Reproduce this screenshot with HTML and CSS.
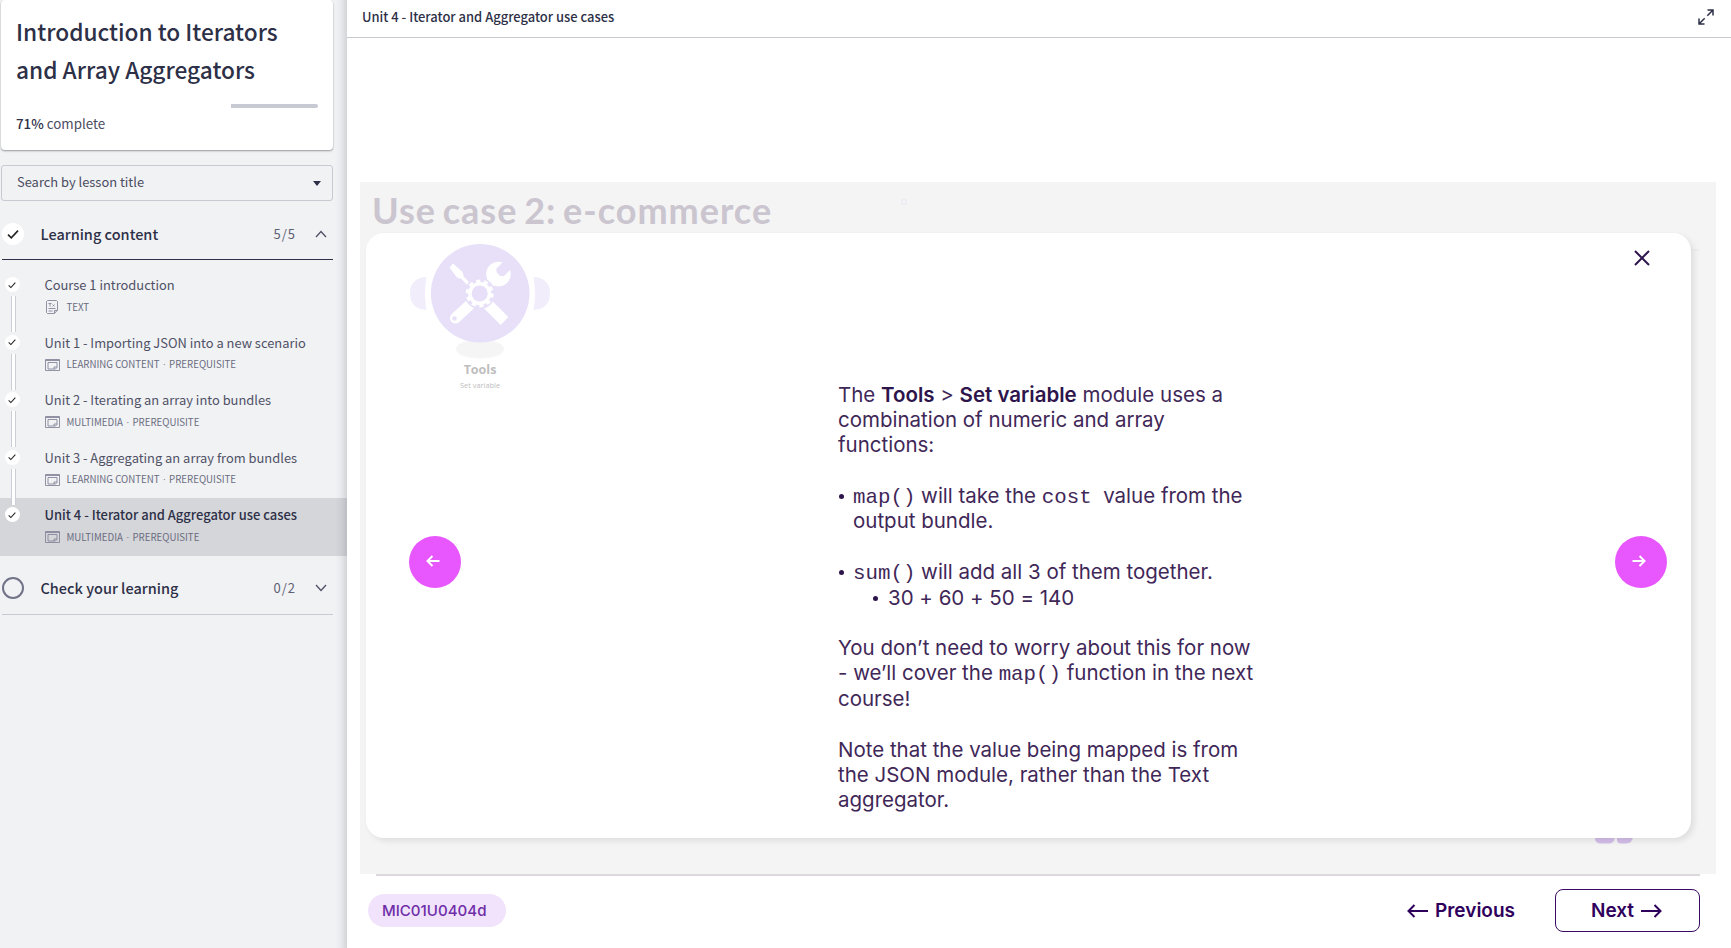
FILE: index.html
```
<!DOCTYPE html>
<html lang="en">
<head>
<meta charset="utf-8">
<title>Introduction to Iterators and Array Aggregators</title>
<link rel="stylesheet" href="styles.css">
</head>
<body>
<svg class="defs" width="0" height="0">
  <symbol id="check" viewBox="0 0 12 12"><path d="M1 6.6 4.3 9.8 11 2.6" fill="none" stroke="currentColor" stroke-width="1.6"/></symbol>
  <symbol id="media" viewBox="0 0 15 12"><path d="M.5.5h14v11H.5zM.5 1.5h14M3 3.500h9v5l-1.500 1.500H3zM9 10V8h3" fill="none" stroke="currentColor" stroke-width=".9"/></symbol>
  <symbol id="doc" viewBox="0 0 12 14"><path d="M1.500.5h9l1 1V10l-3 3.500h-7l-1-1v-11zM2.500 8.500h7M2.500 11h4M8.500 13v-2.500h3M2.500 3.500h3M4 3.500v3M6.500 4.500l2 2M8.500 4.500l-2 2" fill="none" stroke="currentColor" stroke-width=".9"/></symbol>
</svg>
<div class="app">
  <aside class="sidebar">
    <section class="course-card">
      <h1 class="course-title">Introduction to Iterators<br>and Array Aggregators</h1>
      <div class="progress"><div class="progress-rest"></div></div>
      <p class="complete"><b>71%</b> complete</p>
    </section>
    <div class="search"><span>Search by lesson title</span><i class="caret"></i></div>
    <div class="section section-open">
      <span class="section-mark done"><svg class="check-lg"><use href="#check"/></svg></span>
      <span class="section-name">Learning content</span>
      <span class="section-count">5/5</span>
      <svg class="chevron" viewBox="0 0 12 8"><path d="M1 7 6 1.500 11 7"/></svg>
    </div>
    <ul class="lessons">
      <li class="lesson"><span class="dot"><svg class="check-sm"><use href="#check"/></svg></span>
        <div class="lesson-body"><span class="lesson-name">Course 1 introduction</span><span class="lesson-meta"><svg class="doc-icon"><use href="#doc"/></svg><span>TEXT</span></span></div></li>
      <li class="lesson"><span class="dot"><svg class="check-sm"><use href="#check"/></svg></span>
        <div class="lesson-body"><span class="lesson-name">Unit 1 - Importing JSON into a new scenario</span><span class="lesson-meta"><svg class="media-icon"><use href="#media"/></svg><span>LEARNING CONTENT <i>·</i> PREREQUISITE</span></span></div></li>
      <li class="lesson"><span class="dot"><svg class="check-sm"><use href="#check"/></svg></span>
        <div class="lesson-body"><span class="lesson-name">Unit 2 - Iterating an array into bundles</span><span class="lesson-meta"><svg class="media-icon"><use href="#media"/></svg><span>MULTIMEDIA <i>·</i> PREREQUISITE</span></span></div></li>
      <li class="lesson"><span class="dot"><svg class="check-sm"><use href="#check"/></svg></span>
        <div class="lesson-body"><span class="lesson-name">Unit 3 - Aggregating an array from bundles</span><span class="lesson-meta"><svg class="media-icon"><use href="#media"/></svg><span>LEARNING CONTENT <i>·</i> PREREQUISITE</span></span></div></li>
      <li class="lesson lesson-active"><span class="dot"><svg class="check-sm"><use href="#check"/></svg></span>
        <div class="lesson-body"><span class="lesson-name">Unit 4 - Iterator and Aggregator use cases</span><span class="lesson-meta"><svg class="media-icon"><use href="#media"/></svg><span>MULTIMEDIA <i>·</i> PREREQUISITE</span></span></div></li>
    </ul>
    <div class="section section-closed">
      <span class="section-mark"></span>
      <span class="section-name">Check your learning</span>
      <span class="section-count">0/2</span>
      <svg class="chevron" viewBox="0 0 12 8"><path d="M1 1 6 6.500 11 1"/></svg>
    </div>
  </aside>
  <main class="main">
    <header class="topbar">
      <span class="topbar-title">Unit 4 - Iterator and Aggregator use cases</span>
      <svg class="expand" viewBox="0 0 16 16"><path d="M9.500 1H15v5.500M15 1 9.300 6.700M6.500 15H1V9.500M1 15l5.700-5.700"/></svg>
    </header>
    <div class="stage">
      <section class="slide">
        <h2 class="slide-title">Use case 2: e-commerce</h2>
        <span class="speck"></span><span class="rule-end"></span>
        <svg class="brand" viewBox="0 0 38 24"><rect x="0" y="0" width="19.500" height="22.500" rx="5"/><path d="M22 0h16v15q0 7.500-7.500 7.500H26q-4 0-4-4z"/></svg>
        <div class="modal">
          <svg class="tools" viewBox="0 0 142 116">
            <path class="ear" d="M16.500 33Q0 34 0 49.500T16.500 66q-3-16 0-33zM123.500 33Q140 34 140 49.500T123.500 66q3-16 0-33z"/>
            <ellipse class="shade" cx="70" cy="105" rx="24" ry="9.500"/>
            <circle class="face" cx="70.200" cy="49.300" r="49.300"/>
            <g class="tool">
              <path d="M39.500 23.500 43 19.500 52.500 28 54 33 62 41 59.500 43.500 51.500 35 47 33.500z"/>
              <path class="bar" stroke-width="9" d="M74 45.500 86 33"/>
              <circle cx="88.500" cy="30" r="12.300"/>
              <path class="bar" stroke-width="11" d="M73 55.500 94.500 77"/>
              <path class="bar round-end" stroke-width="11" d="M66 55 45.500 74"/>
            </g>
            <path class="face" d="M95 16 86.500 24.500V28L90 32h4L103 23z"/>
            <circle class="face" cx="69.700" cy="49.500" r="15.500"/>
            <circle class="tool" cx="69.700" cy="49.500" r="11.500"/>
            <circle class="teeth" cx="69.700" cy="49.500" r="12"/>
            <circle class="face" cx="69.700" cy="49.500" r="8"/>
            <circle class="face" cx="44.500" cy="74.500" r="2.200"/>
          </svg>
          <div class="tools-label"><b>Tools</b><span>Set variable</span></div>
          <svg class="close" viewBox="0 0 16 16"><path d="M1 1 15 15M15 1 1 15"/></svg>
          <div class="copy">
            <p>The <b>Tools</b> &gt; <b>Set variable</b> module uses a<br>combination of numeric and array<br>functions:</p>
            <ul class="points">
              <li><code>map()</code> will take the <code>cost</code>&nbsp; value from the<br>output bundle.</li>
              <li><code>sum()</code> will add all 3 of them together.
                <ul class="subpoints"><li>30 + 60 + 50 = 140</li></ul></li>
            </ul>
            <p>You don’t need to worry about this for now<br>- we’ll cover the <code>map()</code> function in the next<br>course!</p>
            <p>Note that the value being mapped is from<br>the JSON module, rather than the Text<br>aggregator.</p>
          </div>
          <button class="round round-prev"><svg viewBox="0 0 14 12"><path d="M13.500 6H1.500M6.500 1 1.500 6l5 5"/></svg></button>
          <button class="round round-next"><svg viewBox="0 0 14 12"><path d="M.5 6h12M7.500 1l5 5-5 5"/></svg></button>
        </div>
      </section>
      <footer class="footer">
        <span class="tag">MIC01U0404d</span>
        <div class="nav">
          <button class="link"><svg class="arrow" viewBox="0 0 22 14"><path d="M21 7H1.500M7.500 1 1.500 7l6 6"/></svg><span>Previous</span></button>
          <button class="next"><span>Next</span><svg class="arrow" viewBox="0 0 22 14"><path d="M1 7h19.500M14.500 1l6 6-6 6"/></svg></button>
        </div>
      </footer>
    </div>
  </main>
</div>
</body>
</html>
```
FILE: styles.css
```
* { box-sizing: border-box; }
body { margin: 0; background: #fff; }
h1, h2, p, ul { margin: 0; padding: 0; font-weight: 400; }
ul { list-style: none; }
button { border: 0; background: none; padding: 0; font: inherit; color: inherit; }
svg { display: block; flex: none; }
.defs { position: absolute; }
.app { display: flex; width: 1731px; height: 948px; overflow: hidden; font-family: "Noto Sans CJK SC", "Noto Sans", sans-serif; color: #2d3047; }

.sidebar { position: relative; width: 347px; flex: none; background: #f1f2f4; display: flex; flex-direction: column; }
.sidebar::after { content: ""; position: absolute; inset: 0 0 0 auto; width: 12px; background: linear-gradient(90deg, rgba(90,90,105,0), rgba(90,90,105,.06) 50%, rgba(90,90,105,.2)); }
.course-card { width: 332px; height: 150px; margin-left: 1px; padding: 13px 15px 0; background: #fff; border-radius: 4px; box-shadow: 0 1px 2px rgba(0,0,0,.38); }
.course-title { font-size: 22.700px; font-weight: 500; line-height: 38px; }
.progress { display: flex; justify-content: flex-end; height: 4px; margin-top: 15px; }
.progress-rest { width: 87px; background: #c7c9d3; border-radius: 0 2px 2px 0; }
.complete { font-size: 13.350px; line-height: 20px; margin-top: 6px; color: #4a4c60; }
.complete b { font-weight: 500; color: #2d3047; }
.search { display: flex; align-items: center; justify-content: space-between; width: 332px; height: 36px; margin: 15px 0 0 1px; padding: 0 11px 0 15px; border: 1px solid #c7c9d3; border-radius: 3px; font-size: 12.900px; color: #4a4c60; }
.search span { margin-top: -3px; }
.caret { border: 4px solid transparent; border-top: 5px solid #2d3047; border-bottom: 0; }
.section { display: flex; align-items: center; width: 331px; margin-left: 2px; border-bottom: 1px solid #c7c9d3; }
.section-open { height: 59px; border-color: #2d3047; padding-top: 8px; }
.section-closed { height: 58px; margin-top: 1px; padding-top: 6px; }
.section-mark { width: 22px; height: 22px; border-radius: 50%; border: 2px solid #717389; display: grid; place-items: center; }
.section-mark.done { background: #fff; border: 0; color: #222; }
.check-lg { width: 12px; height: 12px; }
.section-name { flex: 1; margin-top: -1px; padding-left: 16.500px; font-size: 14.500px; font-weight: 500; }
.section-count { margin-top: -1px; font-size: 13px; color: #5d5f73; letter-spacing: 1px; }
.chevron { width: 12px; height: 8px; margin: 0 6px 0 19px; fill: none; stroke: #4f5166; stroke-width: 1.300; }
.lessons { padding-top: 8px; }
.lesson { position: relative; display: flex; height: 57.500px; padding: 9px 0 0 4.500px; }
.lesson:not(:last-child)::after { content: ""; position: absolute; left: 11px; top: 28px; width: 3px; height: 36px; border: solid #cdced5; border-width: 0 1px; background: #fff; z-index: 1; }
.dot { width: 15px; height: 15px; border-radius: 50%; background: #fff; display: grid; place-items: center; color: #222; }
.check-sm { width: 8px; height: 8px; }
.lesson-body { display: flex; flex-direction: column; padding-left: 25px; }
.lesson-name { font-size: 12.900px; line-height: 16px; color: #4f5166; }
.lesson-active { background: #d5d6da; }
.lesson-active .lesson-name { font-size: 12.960px; font-weight: 500; color: #2d3047; }
.lesson-meta { display: flex; align-items: center; height: 14px; margin-top: 7px; font-size: 9.700px; line-height: 14px; color: #6a6c80; }
.lesson-meta i { margin: 0 1.300px; font-family: "Open Sans", sans-serif; font-style: normal; }
.lesson-meta svg { color: #85879a; margin-right: 7px; }
.media-icon { width: 15px; height: 12px; }
.lesson-meta .doc-icon { width: 12px; height: 14px; margin: 0 9px 0 1px; }

.main { flex: 1; display: flex; flex-direction: column; }
.topbar { display: flex; align-items: center; justify-content: space-between; height: 38px; padding: 0 17px 3px 15px; border-bottom: 1px solid #c7c9d3; font-size: 12.940px; font-weight: 500; }
.topbar-title { margin-top: -2px; }
.expand { width: 16px; height: 16px; fill: none; stroke: #2d3047; stroke-width: 1.500; }
.stage { padding: 144px 15px 0 13px; font-family: Inter, sans-serif; color: #2d144b; }
.slide { position: relative; height: 692px; padding: 11px 0 0 12px; background: #f4f4f4; }
.slide-title { font-family: Lato, sans-serif; font-size: 36px; font-weight: 700; line-height: 34px; letter-spacing: 1px; word-spacing: -3px; color: #cac5cf; }
.speck { position: absolute; left: 541px; top: 17px; width: 6px; height: 6px; border: 1px solid #eee6f4; border-radius: 50%; }
.rule-end { position: absolute; left: 1331px; top: 67px; width: 9px; height: 2px; background: #eee; }
.brand { position: absolute; left: 1235px; top: 639px; width: 38px; height: 24px; fill: #d3bee8; }
.modal { position: absolute; left: 6px; top: 51px; width: 1325px; height: 605px; background: #fff; border-radius: 18px; box-shadow: 3px 3px 6px rgba(0,0,0,.09); }
.tools { position: absolute; left: 44px; top: 11px; width: 142px; height: 116px; }
.ear { fill: #f1edfb; }
.shade { fill: #f5f5f5; }
.face { fill: #e7e0f8; }
.tool { fill: #fff; }
.bar { fill: none; stroke: #fff; stroke-linejoin: round; }
.round-end { stroke-linecap: round; }
.teeth { fill: none; stroke: #fff; stroke-width: 4; stroke-dasharray: 4 3.540; }
.tools-label { position: absolute; left: 44px; top: 127px; width: 140px; display: flex; flex-direction: column; align-items: center; font-family: "Open Sans", sans-serif; color: #bebebe; }
.tools-label b { font-size: 12.500px; line-height: 20px; }
.tools-label span { font-size: 7.400px; line-height: 11px; }
.close { position: absolute; left: 1268px; top: 17px; width: 16px; height: 16px; fill: none; stroke: #2d144b; stroke-width: 2; }
.copy { padding: 148.500px 0 0 472px; width: 920px; font-size: 20.500px; font-weight: 300; line-height: 25.260px; letter-spacing: -.01px; color: #3f2858; white-space: nowrap; }
.copy b { font-weight: 600; color: #2d144b; }
.copy p { margin-bottom: 25.260px; }
.copy code { font-family: "Liberation Mono", monospace; font-size: 20.800px; line-height: 1; }
.points > li { position: relative; padding-left: 15px; margin-bottom: 25.260px; }
.points li::before { content: ""; position: absolute; left: 1px; top: 11px; width: 5px; height: 5px; border-radius: 50%; background: #2d144b; }
.subpoints li { position: relative; padding-left: 35px; }
.points .subpoints li::before { left: 20px; }
.round { position: absolute; top: 302.500px; width: 52.500px; height: 52.500px; border-radius: 50%; background: #e856fe; display: grid; place-items: center; }
.round svg { width: 14px; height: 12px; margin: -1px 3px 0 0; fill: none; stroke: #fff; stroke-width: 2; }
.round-prev { left: 42.500px; }
.round-next { left: 1248.500px; }
.footer { display: flex; align-items: center; justify-content: space-between; height: 73px; margin: 0 16px 0 8px; position: relative; }
.footer::before { content: ""; position: absolute; left: 8px; right: 0; top: 0; height: 2px; background: #dcd7dc; }
.tag { display: flex; align-items: center; width: 138px; height: 33px; padding-left: 14px; border-radius: 17px; background: #f0e3fb; color: #6f2da8; font-size: 15.050px; font-weight: 500; }
.nav { display: flex; align-items: center; gap: 40px; font-size: 19px; font-weight: 600; color: #2f005c; }
.link, .next { display: flex; align-items: center; gap: 6px; }
.next { justify-content: center; width: 145px; height: 43px; padding-right: 2px; border: 1.500px solid #3a0a66; border-radius: 8px; }
.arrow { width: 22px; height: 14px; fill: none; stroke: #2f005c; stroke-width: 2; }
```
